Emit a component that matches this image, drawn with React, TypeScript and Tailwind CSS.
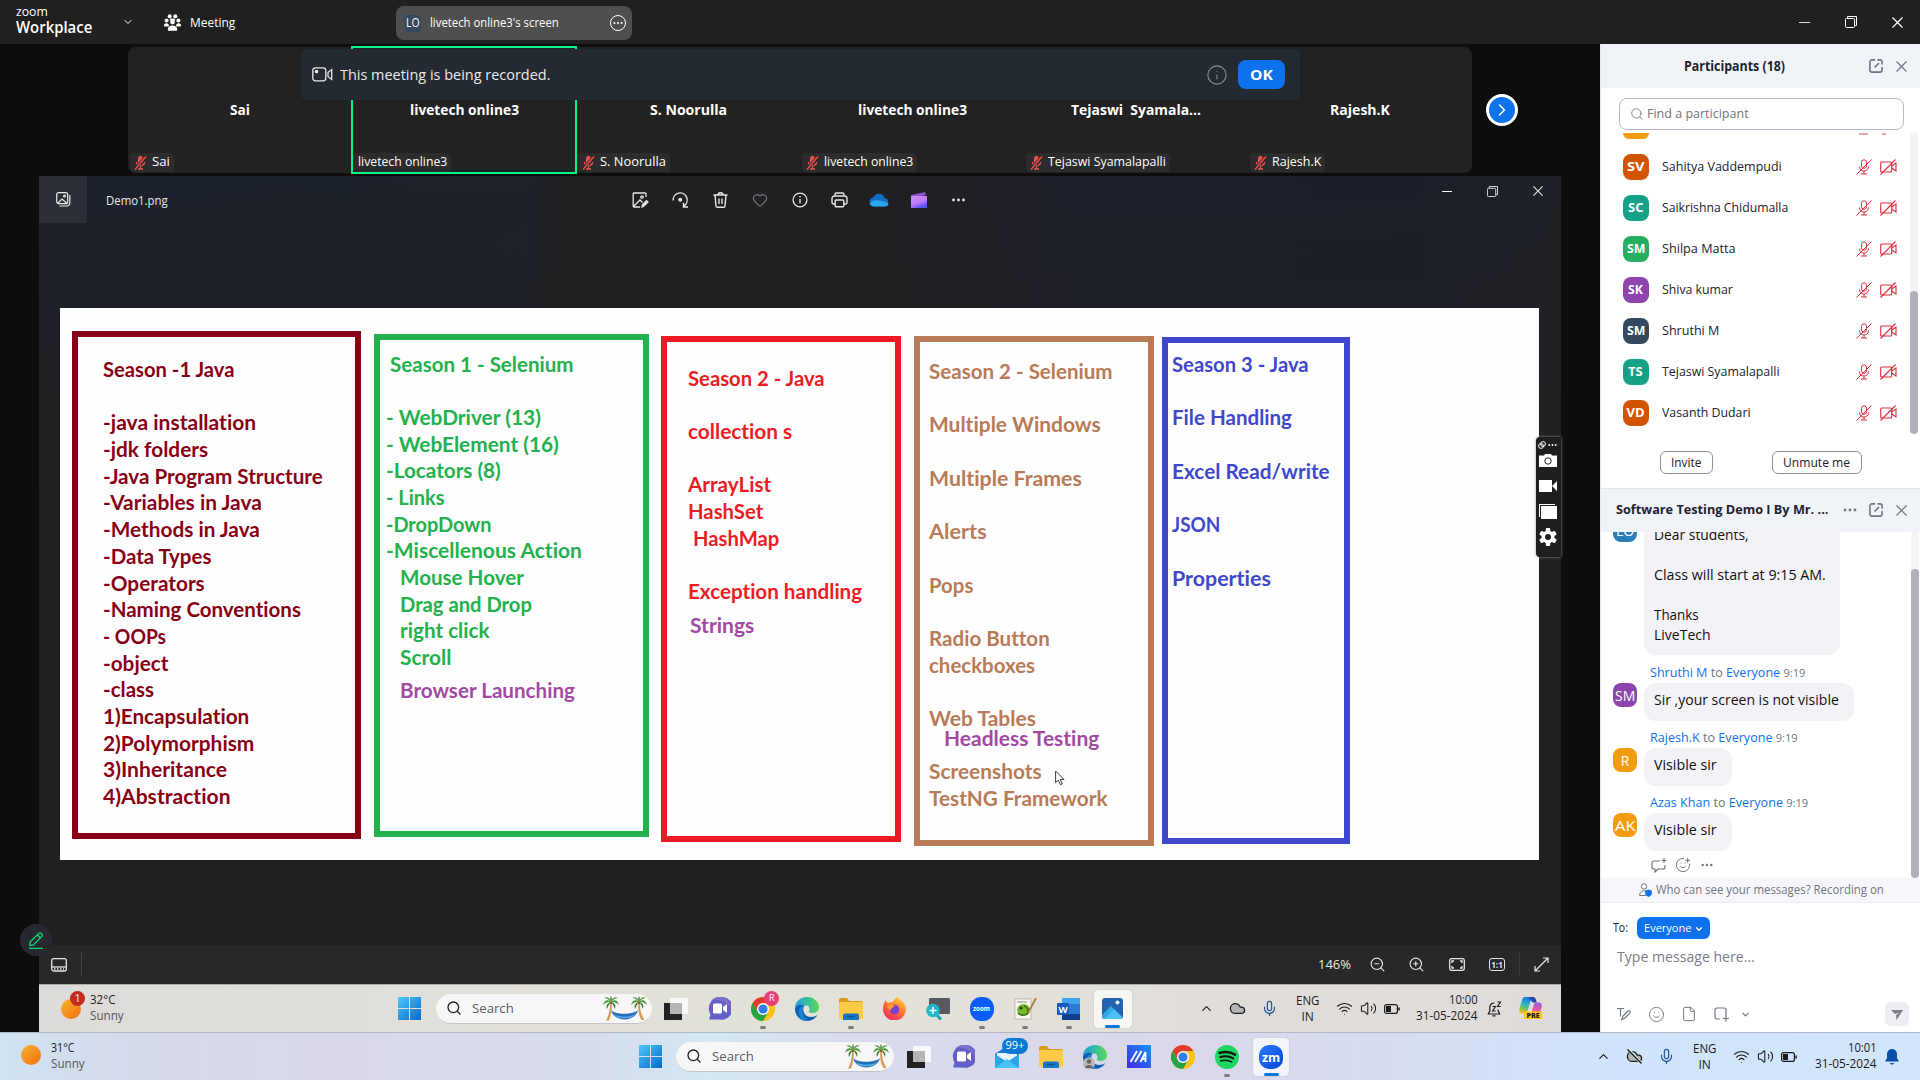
import React, { useLayoutEffect, useRef, useState } from "react";
import {
  X, ChevronDown, ChevronRight, ChevronUp, Search, Mic, Heart, Info,
  ZoomIn, ZoomOut, Wifi, Volume2, Smile, File, SmilePlus, Cloud,
} from "lucide-react";

/* Text set to an exact advance width. */
function Fit({ w, className = "", children }: { w: number; className?: string; children: React.ReactNode }) {
  const ref = useRef<HTMLSpanElement>(null);
  const [k, setK] = useState(1);
  useLayoutEffect(() => {
    if (ref.current) setK(w / ref.current.offsetWidth);
  }, [w]);
  return (
    <span className={`block shrink-0 whitespace-pre ${className}`} style={{ width: w }}>
      <span ref={ref} className="inline-block origin-left" style={{ transform: `scaleX(${k})` }}>{children}</span>
    </span>
  );
}

const RestoreIcon = ({ s = 12 }: { s?: number }) => (
  <svg width={s} height={s} viewBox="0 0 12 12" fill="none" stroke="currentColor">
    <rect x=".5" y="2.5" width="9" height="9" rx="1" />
    <path d="M2.5 2.5V.5h9v9h-2" />
  </svg>
);
const CloseIcon = ({ s = 11 }: { s?: number }) => (
  <svg width={s} height={s} viewBox="0 0 11 11" fill="none" stroke="currentColor" strokeWidth="1.200"><path d="m.5.500 10 10M10.500.500l-10 10" /></svg>
);
const Dots = ({ s = 14 }: { s?: number }) => (
  <svg width={s} height="4" viewBox="0 0 14 4" fill="currentColor"><circle cx="2" cy="2" r="1.4" /><circle cx="7" cy="2" r="1.4" /><circle cx="12" cy="2" r="1.4" /></svg>
);

/* ---------- top bar ---------- */
function TopBar() {
  return (
    <header className="flex h-11 shrink-0 items-center bg-[#202020] text-white">
      <div className="-mt-[3px] ml-4 flex w-[75px] flex-col">
        <Fit w={32} className="h-[14px] text-[13px] leading-[12px] font-medium">zoom</Fit>
        <Fit w={76} className="text-[15.500px] leading-[17px] font-semibold">Workplace</Fit>
      </div>
      <ChevronDown className="ml-[31px]" size={12} />
      <svg className="ml-[30px]" width="17" height="17" viewBox="0 0 17 17" fill="#fff">
        <circle cx="5.7" cy="2.2" r="2" /><circle cx="11.3" cy="2.2" r="2" /><circle cx="2.6" cy="6.6" r="2" /><circle cx="14.4" cy="6.6" r="2" />
        <circle cx="8.5" cy="8" r="2.4" /><rect x="5.8" y="4.4" width="5.4" height="2" rx="1" /><path d="M0 11.5c0-3 4.5-3 5 0 0 .8-.3 1-1 1H1c-.7 0-1-.2-1-1zM12 11.5c.5-3 5-3 5 0 0 .8-.3 1-1 1h-3c-.7 0-1-.2-1-1z" />
        <path d="M3.8 15.2c0-4.8 9.4-4.8 9.4 0 0 1-.5 1.6-1.4 1.6H5.200c-.9 0-1.400-.6-1.400-1.600z" />
      </svg>
      <Fit w={45} className="mt-[2px] ml-[9px] text-[13px]">Meeting</Fit>
      <div className="mt-[2px] ml-[161px] flex h-[34px] w-[236px] items-center rounded-lg bg-[#4f4f4f]">
        <span className="ml-2 flex size-[17px] items-center justify-center rounded bg-[#34495e] text-[12px]"><Fit w={14}>LO</Fit></span>
        <Fit w={129} className="ml-[9px] text-[13px]">livetech online3's screen</Fit>
        <span className="ml-[51px] flex size-4 items-center justify-center rounded-full border border-white"><Dots s={10} /></span>
      </div>
      <div className="mr-[17px] ml-auto flex items-center gap-[35px]">
        <span className="h-px w-[11px] bg-[#ddd]" /><RestoreIcon /><CloseIcon />
      </div>
    </header>
  );
}

/* ---------- video strip ---------- */
const MutedMic = () => (
  <svg width="13" height="14" viewBox="0 0 13 14"><rect x="4" y="0" width="5" height="8" rx="2.500" fill="#f0504f" /><path d="M2.500 6c0 5 8 5 8 0M6.500 9.500V13M4 13h5" stroke="#f0504f" fill="none" strokeWidth="1.300" /><path d="M12 .5 1 13.500" stroke="#222" strokeWidth="3" /><path d="M12 .5 1 13.500" stroke="#f0504f" strokeWidth="1.400" /></svg>
);
const tiles = [
  { t: "Sai", tw: 20, l: "Sai", lw: 18, m: true },
  { t: "livetech online3", tw: 109, l: "livetech online3", lw: 89, m: false },
  { t: "S. Noorulla", tw: 77, l: "S. Noorulla", lw: 66, m: true },
  { t: "livetech online3", tw: 109, l: "livetech online3", lw: 89, m: true },
  { t: "Tejaswi  Syamala...", tw: 130, l: "Tejaswi Syamalapalli", lw: 118, m: true },
  { t: "Rajesh.K", tw: 60, l: "Rajesh.K", lw: 49, m: true },
];
function VideoStrip() {
  return (
    <div className="relative flex h-[132px] shrink-0 items-center pl-[128px]">
      <div className="flex h-[126px] w-[1344px] rounded-lg bg-[#222]">
        {tiles.map((t, i) => (
          <div key={i} className="relative flex w-[224px] flex-col items-center text-white">
            {!t.m && <div className="absolute -inset-x-px -top-px -bottom-px border-2 border-[#00f58a]" />}
            <div className="flex h-[124px] items-center"><Fit w={t.tw} className="text-[15px] font-bold">{t.t}</Fit></div>
            <div className="absolute bottom-[1px] left-[2px] flex h-[19px] items-center gap-[5px] rounded bg-[#2c2c2c] px-1 text-[12.500px]">
              {t.m && <MutedMic />}<Fit w={t.lw}>{t.l}</Fit>
            </div>
          </div>
        ))}
      </div>
      <span className="ml-[14px] flex size-8 items-center justify-center rounded-full border-[3px] border-white bg-[#0e72ed] text-white"><ChevronRight size={20} strokeWidth={1.800} /></span>
      <div className="absolute top-[5px] left-[301px] flex h-[51px] w-[999px] items-center rounded-md bg-[#242a31] text-[#e8e8e8]">
        <svg className="ml-[11px]" width="21" height="15" viewBox="0 0 21 15" fill="none" stroke="currentColor" strokeWidth="1.300"><rect x=".8" y=".8" width="13" height="13" rx="2.500" /><circle cx="4.500" cy="4.500" r="1.200" fill="currentColor" /><path d="M16 5.500 19.700 2.500v10L16 9.500z" /></svg>
        <Fit w={210} className="ml-[7px] text-[15px]">This meeting is being recorded.</Fit>
        <Info className="ml-[656px] text-[#8b8f94]" size={22} strokeWidth={1.200} />
        <span className="ml-[10px] flex h-[29px] w-[47px] items-center justify-center rounded-lg bg-[#0e72ed] text-[15px] font-bold text-white"><Fit w={23}>OK</Fit></span>
      </div>
    </div>
  );
}

/* ---------- board ---------- */
type Line = [string, number, string?];
function Board({ box, lines }: { box: string; lines: (Line | null)[] }) {
  return (
    <div className={`relative shrink-0 border-[6px] font-['Lato',sans-serif] text-[21.500px] leading-[26.700px] font-bold [font-variant-ligatures:none] ${box}`}>
      {lines.map((l, i) => l ? <div key={i} className={`h-[26.700px] ${l[2] ?? ""}`}><Fit w={l[1] + 1.5}>{l[0]}</Fit></div> : <div key={i} className="h-[26.700px]" />)}
    </div>
  );
}
function Picture() {
  return (
    <div className="relative ml-[21px] flex h-[552px] w-[1479px] items-start bg-[#fefefe]">
      <Board box="ml-[12px] mt-[22.500px] h-[508px] w-[289px] border-[#880015] text-[#880015] pl-[24.500px] pt-[19.500px]" lines={[
        ["Season -1 Java", 130], null, ["-java installation", 152], ["-jdk folders", 104], ["-Java Program Structure", 218], ["-Variables in Java", 157], ["-Methods in Java", 155], ["-Data Types", 107], ["-Operators", 100], ["-Naming Conventions", 196], ["- OOPs", 62], ["-object", 64], ["-class", 50], ["1)Encapsulation", 145], ["2)Polymorphism", 150], ["3)Inheritance", 123], ["4)Abstraction", 126]]} />
      <Board box="ml-[13px] mt-[26px] h-[503px] w-[275px] border-[#22b14c] text-[#22b14c] pl-[6px] pt-[10.500px]" lines={[
        ["Season 1 - Selenium", 182, "ml-[4px]"], null, ["- WebDriver (13)", 153], ["- WebElement (16)", 171], ["-Locators (8)", 113], ["- Links", 57], ["-DropDown", 104], ["-Miscellenous Action", 194], ["Mouse Hover", 122, "ml-[13.500px]"], ["Drag and Drop", 130, "ml-[13.500px]"], ["right click", 88, "ml-[13.500px]"], ["Scroll", 50, "ml-[13.500px]"], ["Browser Launching", 173, "ml-[13.500px] mt-[6px] text-[#a349a4]"]]} />
      <Board box="ml-[12px] mt-[28px] h-[506px] w-[240px] border-[#ed1c24] text-[#ed1c24] pl-[21px] pt-[22.500px]" lines={[
        ["Season 2 - Java", 135], null, ["collection s", 103], null, ["ArrayList", 82], ["HashSet", 74], ["HashMap", 85, "ml-[5px]"], null, ["Exception handling", 173], ["Strings", 63, "ml-[2px] mt-[7px] text-[#a349a4]"]]} />
      <Board box="ml-[12.500px] mt-[28px] h-[510px] w-[240px] border-[#b97a57] text-[#b97a57] pl-[9.500px] pt-[16px]" lines={[
        ["Season 2 - Selenium", 182], null, ["Multiple Windows", 170], null, ["Multiple Frames", 151], null, ["Alerts", 56], null, ["Pops", 43], null, ["Radio Button", 119], ["checkboxes", 105], null, ["Web Tables", 105], null, ["Screenshots", 111], ["TestNG Framework", 177]]} />
      <div className="absolute top-[417px] left-[884px] font-['Lato',sans-serif] text-[21.500px] leading-[26.700px] font-bold text-[#a349a4] [font-variant-ligatures:none]"><Fit w={155}>Headless Testing</Fit></div>
      <Board box="ml-[8px] mt-[29px] h-[507px] w-[188px] border-[#3f48cc] text-[#3f48cc] pl-[4.500px] pt-[8px]" lines={[
        ["Season 3 - Java", 135], null, ["File Handling", 118], null, ["Excel Read/write", 156], null, ["JSON", 47], null, ["Properties", 97]]} />
      <svg className="absolute top-[462px] left-[995px]" width="10" height="16" viewBox="0 0 10 16"><path d="M.6 1v11.500l2.800-2.300 2 4.500 1.900-.8-2-4.400H9z" fill="#fff" stroke="#223" strokeWidth=".9" /></svg>
      <div className="absolute top-[129px] left-[1476px] flex h-[120px] w-[25px] flex-col items-center rounded-l bg-[#1e1e20] pr-[2px] text-white shadow-[0_0_3px_#999]">
        <div className="mt-[3px] flex h-[9px] items-center gap-[2px]"><svg width="8" height="8" viewBox="0 0 8 8" fill="none" stroke="currentColor"><circle cx="3" cy="5" r="2.400" /><circle cx="5" cy="3" r="2.400" /></svg><Dots s={9} /></div>
        <svg className="mt-[5px]" width="18" height="13" viewBox="0 0 18 13"><path d="M0 1.500h5L6 0h6l1 1.500h5V13H0z" fill="#fff" /><circle cx="9" cy="7" r="3.200" fill="none" stroke="#1e1e20" /></svg>
        <svg className="mt-[13px]" width="18" height="12" viewBox="0 0 18 12" fill="#fff"><path d="M0 0h13v12H0zM13 6l5-5v10z" /></svg>
        <svg className="mt-[12px]" width="18" height="15" viewBox="0 0 18 15" fill="#fff"><path d="M0 0h16v1H1v12H0z" /><path d="M2 2h16v13H2z" /></svg>
        <svg className="mt-[9px]" width="18" height="18" viewBox="0 0 18 18"><g fill="#fff"><circle cx="9" cy="9" r="6.500" />{[0, 60, 120].map((a) => <rect key={a} x="6.800" y="0" width="4.400" height="18" rx="1" transform={`rotate(${a} 9 9)`} />)}</g><circle cx="9" cy="9" r="3" fill="#1e1e20" /></svg>
      </div>
    </div>
  );
}

/* ---------- photo viewer ---------- */
function PhotoViewer() {
  return (
    <section className="flex h-[808px] flex-col bg-[#202021] bg-[linear-gradient(180deg,transparent_0px,#202021_320px),linear-gradient(90deg,#1b212c_0%,#1d222b_32%,#202123_34%,#221f22_55%,#1d1f2b_68%,#1c1f2a_90%,#1f2128_100%)]">
      <div className="flex h-[132px] shrink-0 items-start text-[#e6e6e6]">
        <div className="flex h-[47px] w-12 items-center justify-center bg-[#2b2f38]"><svg width="15" height="15" viewBox="0 0 15 15" fill="none" stroke="currentColor" strokeWidth="1.200"><rect x=".7" y=".7" width="11" height="11" rx="2" /><path d="M13.800 3v8a3 3 0 0 1-3 3H3.500M2 11l4-4 4.500 4" /><circle cx="8.500" cy="4" r=".9" /></svg></div>
        <Fit w={62} className="mt-[16px] ml-[19px] text-[12.500px] leading-[18px]">Demo1.png</Fit>
        <div className="mt-[15px] ml-[453px] grid grid-cols-[repeat(9,39.700px)] place-items-center [&>*]:h-[18px]">
          <svg width="17" height="18" viewBox="0 0 17 18" fill="none" stroke="currentColor" strokeWidth="1.300"><path d="M14 6V2.800A.8.8 0 0 0 13.200 2H2a.8.8 0 0 0-.8.8v12.400c0 .4.300.8.800.8h6M2 15l6-6 2.500 2.500" /><circle cx="10" cy="6" r="1.200" /><path d="m9.500 16.500.7-3L14.500 9l2 2-4.500 4.600z" fill="currentColor" strokeWidth=".6" /></svg>
          <svg width="17" height="18" viewBox="0 0 17 18" fill="none" stroke="currentColor" strokeWidth="1.400"><path d="M1.200 9.500A7 7 0 1 1 12 14.800M16 16h-4.500v-4.200" /><circle cx="8.200" cy="8.800" r="1.300" fill="currentColor" /></svg>
          <svg width="15" height="18" viewBox="0 0 15 18" fill="none" stroke="currentColor" strokeWidth="1.400"><path d="M.5 4h14M5 4c0-3 5-3 5 0M2 4l1 11a1.400 1.400 0 0 0 1.400 1.300h6.200A1.400 1.400 0 0 0 12 15l1-11M6 7.500v5.500M9 7.500v5.500" /></svg>
          <Heart size={16} strokeWidth={1.600} className="text-[#77787b]" />
          <svg width="16" height="18" viewBox="0 0 16 18" fill="none" stroke="currentColor" strokeWidth="1.300"><circle cx="8" cy="9" r="6.900" /><path d="M8 8v4.500M8 5v1.500" /></svg>
          <svg width="17" height="18" viewBox="0 0 17 18" fill="none" stroke="currentColor" strokeWidth="1.400"><path d="M4 5V3.500A1.500 1.500 0 0 1 5.500 2h6A1.500 1.500 0 0 1 13 3.500V5M4 13H2.500A1.500 1.500 0 0 1 1 11.500V7.300A2.300 2.300 0 0 1 3.300 5h10.400A2.300 2.300 0 0 1 16 7.300v4.200a1.500 1.500 0 0 1-1.500 1.500H13" /><rect x="4.200" y="9" width="8.600" height="6.800" rx="1" /></svg>
          <svg width="20" height="14" viewBox="0 0 20 14"><path d="M5 13.500a4.500 4.500 0 0 1-.8-8.900A6 6 0 0 1 15.500 5 4.300 4.300 0 0 1 15.800 13.500z" fill="#0f70c8" /><path d="M.8 10.500C3 7 8 5.500 19.500 10.500a3.500 3.500 0 0 1-3.500 3H5a4.500 4.500 0 0 1-4.200-3z" fill="#28a8ea" /></svg>
          <svg width="16" height="16" viewBox="0 0 16 16"><defs><linearGradient id="cg" x1="0" y1="0" x2=".5" y2="1"><stop stopColor="#c88af6" /><stop offset=".6" stopColor="#c07ef8" /><stop offset="1" stopColor="#5b52f0" /></linearGradient></defs><path d="M0 3 14 0l1 3-9 2.500H0z" fill="#8d52c9" /><path d="M0 4h16v12H0z" fill="url(#cg)" /></svg>
          <span className="flex items-center"><Dots s={17} /></span>
        </div>
        <div className="mt-[7px] mr-[18px] ml-auto flex h-4 items-center gap-[35px]"><span className="h-px w-[10px] bg-white" /><RestoreIcon s={11} /><CloseIcon s={10} /></div>
      </div>
      <Picture />
      <div className="mt-auto flex h-[39px] items-center bg-[#28282b] text-[#e6e6e6]">
        <svg className="ml-3" width="16" height="14" viewBox="0 0 16 14" fill="none" stroke="currentColor" strokeWidth="1.300"><rect x=".7" y=".7" width="14.600" height="12.300" rx="2" /><path d="M.7 9h14.600" /><path d="M3 11h10" strokeDasharray="1.500 1.500" /></svg>
        <span className="ml-[14px] h-6 w-px bg-[#444]" />
        <Fit w={33} className="ml-auto text-[13px]">146%</Fit>
        <ZoomOut className="ml-[18px]" size={17} strokeWidth={1.600} />
        <ZoomIn className="ml-[22px]" size={17} strokeWidth={1.600} />
        <svg className="ml-[24px]" width="16" height="13" viewBox="0 0 16 13" fill="none" stroke="currentColor" strokeWidth="1.300"><rect x=".7" y=".7" width="14.600" height="11.600" rx="1.800" /><path d="M3 5V3h2M11 3h2v2M13 8v2h-2M5 10H3V8" /></svg>
        <span className="ml-[24px] flex h-[13px] w-4 items-center justify-center rounded-[3px] border border-current text-[8px] font-bold">1:1</span>
        <span className="ml-[14px] h-6 w-px bg-[#3a3a3d]" />
        <svg className="mr-[12px] ml-[14px]" width="15" height="15" viewBox="0 0 15 15" fill="none" stroke="currentColor" strokeWidth="1.200"><path d="M9 1h5v5M14 1 1 14M1 9v5h5" /></svg>
      </div>
    </section>
  );
}

/* ---------- taskbar icons ---------- */
const Win = () => (
  <svg width="23" height="23" viewBox="0 0 23 23"><defs><linearGradient id="wg" x1="0" y1="0" x2="1" y2="1"><stop stopColor="#4cc8f8" /><stop offset="1" stopColor="#0669cc" /></linearGradient></defs><path d="M0 0h11v11H0zM12 0h11v11H12zM0 12h11v11H0zM12 12h11v11H12z" fill="url(#wg)" /></svg>
);
const Frond = ({ x }: { x: number }) => (
  <g transform={`translate(${x} 6)`}>
    <g fill="#4d9a3a"><path d="M0 0C-3-3-7-2-8 3-5 0-3 0 0 0z" /><path d="M0 0c3-3 7-2 8 3C5 0 3 0 0 0z" /><path d="M0 0C-1-4-4-6-7-4-4-4-2-2 0 0zM0 0c1-4 4-6 7-4C4-4 2-2 0 0z" /></g>
    <g fill="#2f7429"><path d="M0 0c-4 1-5 4-4 7 1-3 2-5 4-7zM0 0c4 1 5 4 4 7C3 4 2 2 0 0z" /><path d="M0 0c-1-2-1-4 0-6 1 2 1 4 0 6z" /></g>
    <circle cy=".8" r="1.300" fill="#8a5a28" />
  </g>
);
const Palms = () => (
  <svg width="45" height="25" viewBox="0 0 45 25">
    <g fill="#d39a58"><path d="M8 7h1.800C10 14 9 19 7 24.500H4C7 19 8 14 8 7zM36.200 7H38c0 7 1 11 4.500 17h-3C36.500 19 36 14 36.200 7z" /></g>
    <path d="M9 14c4 5 22 5 27 0-3 12.500-24 12.500-27 0z" fill="#2470b8" /><path d="M10.500 17c5 5 19 5 24 0-4 7-20 7-24 0z" fill="#5eb0ee" />
    <Frond x={9} /><Frond x={37} />
  </svg>
);
const TaskView = () => (<svg width="24" height="22" viewBox="0 0 24 22"><rect x="0" y="5" width="18" height="17" fill="#222" /><rect x="6" y="0" width="18" height="16" fill="#fff" opacity=".8" /><rect x="6" y="5" width="12" height="11" fill="#b5b5b5" /></svg>);
const ChatIcon = () => (<svg width="23" height="23" viewBox="0 0 23 23"><path d="M11.500 0a11.500 11.500 0 1 1-1 22.500H1l1.500-5A11.500 11.500 0 0 1 11.500 0z" fill="#6460c8" /><path d="M11.500 0A11.500 11.500 0 0 1 23 11C18 3 8 1 3 4a11 11 0 0 1 8.500-4z" fill="#7c70c8" /><rect x="5" y="6.500" width="9" height="10" rx="1.500" fill="#fff" /><path d="m15 10 4-3v9l-4-3z" fill="#fff" /></svg>);
const Chrome = () => (<svg width="24" height="24" viewBox="0 0 24 24"><circle cx="12" cy="12" r="12" fill="#fbc116" /><path d="M12 0a12 12 0 0 1 10.400 6H12L6.800 15 1.600 6A12 12 0 0 1 12 0z" fill="#e33b2e" /><path d="M1.600 6A12 12 0 0 0 12 24l5.200-9-5.200 3-5.200-3z" fill="#25a347" /><circle cx="12" cy="12" r="6" fill="#fff" /><circle cx="12" cy="12" r="4.600" fill="#2f7de9" /></svg>);
const Edge = () => (<svg width="24" height="24" viewBox="0 0 24 24"><defs><linearGradient id="eg" x1="0" x2="1"><stop stopColor="#1b9de2" /><stop offset="1" stopColor="#5bd855" /></linearGradient></defs><path d="M0 11.500C0 4 6 0 12 0c7 0 12 5 12 10 0 4-3 6-6.500 6-3 0-4-1-3.500-2 1-1.500 1-5-3-5.500C6 8 1 10 0 14z" fill="url(#eg)" /><path d="M0 12C1 8 6 7 9.500 8.500 7 11 8 20 16 20c2.500 0 5-1 6.500-2C20 22 16 24 12 24 5 24 0 18.500 0 12z" fill="#0f5fb5" /><path d="M9.500 8.500c-4 5-2 13 5 15.300C8 24.500 4 21 3.700 16 3.500 12 6 9 9.500 8.500z" fill="#1c82d4" /></svg>);
const Folder = () => (<svg width="24" height="22" viewBox="0 0 24 22"><path d="M0 2a2 2 0 0 1 2-2h6l2 3H22a2 2 0 0 1 2 2v4H0z" fill="#d99a1b" /><rect x="0" y="4" width="24" height="17" rx="1.500" fill="#fccb45" /><path d="M4 22v-4.500a2 2 0 0 1 2-2h12a2 2 0 0 1 2 2V22z" fill="#1976c4" /><path d="M8 18.500h8" stroke="#114f8d" strokeWidth="1.300" /></svg>);
const Firefox = () => (<svg width="23" height="23" viewBox="0 0 23 23"><defs><linearGradient id="fg" x1=".8" y1="0" x2=".2" y2="1"><stop stopColor="#ffd836" /><stop offset=".5" stopColor="#ff6d2e" /><stop offset="1" stopColor="#e8246b" /></linearGradient></defs><path d="M15 0c1 3 8 5 8 12a11.500 11.500 0 0 1-23 0C0 8 1 5 3 3c0 2 1 2.500 2 3 2-1 3-1 5-1 1-3 3-4 5-5z" fill="url(#fg)" /><circle cx="11.500" cy="12.500" r="4.800" fill="#7a3fd0" /><path d="M4 8c4-2 6 0 8 1-2 1-4 2-4 4-1 0-4-1-4-5z" fill="#ff9a2c" /></svg>);
const Snip = () => (<svg width="24" height="22" viewBox="0 0 24 22"><rect x="3" y="0" width="21" height="16" rx="1" fill="#56595f" /><path d="m10 16 5 5.500" stroke="#1ba4b8" strokeWidth="3" /><circle cx="7" cy="12.500" r="6.800" fill="#23b5ca" /><path d="M7 9v7M3.500 12.500h7" stroke="#fff" strokeWidth="1.500" /></svg>);
const ZoomRound = () => (<span className="flex size-6 items-center justify-center rounded-[11px] bg-[#0b5cff] text-white"><Fit w={17} className="text-[7px] leading-[8px] font-bold">zoom</Fit></span>);
const Npp = () => (<svg width="23" height="22" viewBox="0 0 23 22"><rect x="1" y="1" width="16" height="20" fill="#f8f8f0" stroke="#999" strokeWidth=".6" /><path d="M3 4h10" stroke="#888" /><ellipse cx="9.500" cy="12" rx="6.500" ry="6" fill="#79bb2e" /><circle cx="7" cy="10" r="1.600" fill="#24401a" /><path d="M4 15c3 3 8 3 11-1M10 8c4 1 5 4 3 6" stroke="#2c6b18" fill="none" strokeWidth="1.500" /><path d="m14 15 8-15" stroke="#b07b35" strokeWidth="1.800" /></svg>);
const Word = () => (<svg width="24" height="22" viewBox="0 0 24 22"><rect x="5" y="0" width="18" height="22" rx="1.500" fill="#2b7cd3" /><path d="M5 0h18v6H5z" fill="#41a5ee" /><path d="M5 16h18v6H5z" fill="#103f91" /><rect x="0" y="5" width="12" height="12" rx="1" fill="#185abd" /><text x="6" y="14.500" fontSize="9.500" fontWeight="700" fill="#fff" textAnchor="middle">W</text></svg>);
const Photos = () => (<svg width="21" height="21" viewBox="0 0 21 21"><rect width="21" height="21" rx="3" fill="#2163ae" /><path d="M0 17 9 8l12 12-3 1H3a3 3 0 0 1-3-3z" fill="#31a9e8" /><path d="M3 21 12 11l9 9-3 1z" fill="#4fc0f2" /><circle cx="15.500" cy="4.500" r="2" fill="#fff" /></svg>);
const Copilot = () => (
  <svg width="24" height="23" viewBox="0 0 24 23">
    <defs>
      <linearGradient id="cl" x1=".6" y1="0" x2=".3" y2="1"><stop stopColor="#1a6fd8" /><stop offset=".45" stopColor="#27b5c4" /><stop offset=".75" stopColor="#7cc84f" /><stop offset="1" stopColor="#f2c21c" /></linearGradient>
      <linearGradient id="cr" x1=".5" y1="0" x2=".4" y2="1"><stop stopColor="#a25be0" /><stop offset=".6" stopColor="#ea5c9f" /><stop offset="1" stopColor="#f58a5a" /></linearGradient>
    </defs>
    <path d="M6 0h9L11.500 4 8.500 14c-.7 2-1.500 2.500-3 2.500H3c-3 0-3-3-2.500-5L3 3C3.600 1 4.500 0 6 0z" fill="url(#cl)" />
    <path d="M8.500 0H14c2.500 0 3 2.500 3.800 5.500H14.500C12.500 5.500 12 3 11 1.500 10.500.5 9.500 0 8.500 0z" fill="#2448b0" />
    <path d="M15.500 5.500H20c3 0 3.200 3 2.500 5.500L21 16c-.5 1.500-1.500 2.500-3 2.500H9c2 0 3-1 3.500-3z" fill="url(#cr)" />
    <rect x="5" y="14.500" width="18" height="7.500" rx="1" fill="#ffc61a" /><text x="14" y="20.800" fontSize="7" fontWeight="800" textAnchor="middle" fill="#222">PRE</text>
  </svg>
);
const Mail = () => (<svg width="24" height="22" viewBox="0 0 24 22"><path d="M0 8 12 0l12 8v14H0z" fill="#1478c8" /><path d="M2 7h20v8H2z" fill="#eaf6ff" /><path d="m0 8 12 8 12-8v14H0z" fill="#2ba5e6" /><path d="M0 22 12 13l12 9z" fill="#48c3f5" /></svg>);
const EdgeUser = () => (<span className="relative"><Edge /><svg className="absolute -bottom-px left-0" width="12" height="13" viewBox="0 0 12 13"><circle cx="6" cy="6.500" r="6" fill="#b9b9b9" /><circle cx="6" cy="4.500" r="2.200" fill="#666" /><path d="M2 11c0-4 8-4 8 0z" fill="#666" /></svg></span>);
const Armoury = () => (<svg width="24" height="23" viewBox="0 0 24 23"><defs><linearGradient id="ag" x1="1" y1="0" x2="0" y2="1"><stop stopColor="#1296f5" /><stop offset="1" stopColor="#4527e8" /></linearGradient></defs><rect width="24" height="23" fill="url(#ag)" /><path d="m3.500 17 6.500-11M8 17l6.500-11M13.500 17l5-10v10M15 14h3" stroke="#fff" strokeWidth="1.800" fill="none" /></svg>);
const Spotify = () => (<svg width="24" height="24" viewBox="0 0 24 24"><circle cx="12" cy="12" r="12" fill="#1ed760" /><g stroke="#111" fill="none" strokeLinecap="round"><path d="M4.500 8c5-1.500 11-1 15.500 1.600" strokeWidth="2.400" /><path d="M5.200 12c4.500-1.300 9.500-.8 13 1.400" strokeWidth="2" /><path d="M5.800 15.800c4-1 8-.6 10.800 1.100" strokeWidth="1.600" /></g></svg>);
const Zm = () => (<span className="flex size-6 items-center justify-center rounded-[10px] bg-linear-to-br from-[#2f7bff] to-[#0743d8] text-white"><Fit w={18} className="text-[13px] leading-[14px] font-bold">zm</Fit></span>);

const Battery = () => (<svg width="16" height="10" viewBox="0 0 16 10"><rect x=".6" y=".6" width="12.800" height="8.800" rx="2" fill="none" stroke="currentColor" strokeWidth="1.200" /><rect x="2" y="2" width="5" height="6" fill="currentColor" /><path d="M15 3.500v3" stroke="currentColor" strokeWidth="1.500" /></svg>);

function SearchPill({ className }: { className: string }) {
  return (
    <div className={`flex h-[30px] items-center rounded-full border-b border-[#c4c4c8] bg-[#f8f7f8] ${className}`}>
      <Search className="ml-[10px] text-[#222]" size={16} strokeWidth={2} />
      <Fit w={42} className="ml-[10px] text-[13.500px] text-[#5a5a5a]">Search</Fit>
      <span className="mr-[5px] ml-auto"><Palms /></span>
    </div>
  );
}
function Weather({ t, w }: { t: string; w: number }) {
  return (
    <div className="-mt-[2px] text-[12px] leading-4 text-[#222]"><Fit w={w}>{t}</Fit><Fit w={34} className="text-[#555]">Sunny</Fit></div>
  );
}
const Sun = () => <span className="block size-[20px] rounded-full bg-linear-to-br from-[#f5b52a] to-[#f06a0f]" />;

function Tray({ time, muted, children }: { time: string; muted?: boolean; children: React.ReactNode }) {
  return (
    <div className="ml-auto flex items-center text-[#1b1b1b]">
      <ChevronUp size={15} strokeWidth={1.800} />
      <span className="relative ml-[15px]">
        <Cloud className="fill-[#b5b5b5]" size={17} strokeWidth={1.800} />
        {muted && <svg className="absolute inset-0" width="17" height="17" viewBox="0 0 17 17"><path d="m2.500 1.500 13 14" stroke="#d5e4f8" strokeWidth="3" /><path d="m1.500 1.500 14 14" stroke="#1b1b1b" strokeWidth="1.400" /></svg>}
      </span>
      <Mic className="ml-[15px] text-[#24579d]" size={17} strokeWidth={1.700} />
      <div className="ml-[18px] flex flex-col items-center text-[12px] leading-4"><Fit w={23}>ENG</Fit><Fit w={12}>IN</Fit></div>
      <Wifi className="ml-[17px]" size={17} strokeWidth={1.500} /><Volume2 className="ml-[7px]" size={17} strokeWidth={1.500} /><span className="ml-[7px]"><Battery /></span>
      <div className={`-mt-px flex w-[62px] flex-col items-end text-[12px] leading-4 ${muted ? "ml-[18px]" : "ml-[16px]"}`}><Fit w={29}>{time}</Fit><Fit w={62}>31-05-2024</Fit></div>
      {children}
    </div>
  );
}

const Slot = ({ children, state = "" }: { children: React.ReactNode; state?: string }) => (
  <div className={`relative flex h-[38px] items-center justify-center rounded ${state === "active" ? "bg-white/70 shadow-[0_0_1px_#888]" : ""}`}>
    {children}
    {state === "dot" && <span className="absolute -bottom-px h-[3px] w-[6px] rounded bg-[#7c7c7c]" />}
    {state === "active" && <span className="absolute bottom-0 h-[3px] w-[15px] rounded bg-[#0a76d6]" />}
  </div>
);

function SharedTaskbar() {
  return (
    <div className="flex h-12 items-center border-t border-[#aaa] bg-linear-to-r from-[#dedcda] via-[#e3e2d8] to-[#dfdbda]">
      <div className="relative ml-[22px]"><Sun /><span className="absolute -top-[8px] left-[9px] flex size-[15px] items-center justify-center rounded-full bg-[#c42b1c] text-[10px] text-white">1</span></div>
      <div className="ml-[9px]"><Weather t="32°C" w={25} /></div>
      <span className="ml-[274px]"><Win /></span>
      <SearchPill className="ml-[15px] w-[216px]" />
      <div className="ml-[5px] grid grid-cols-[repeat(11,37.700px)] gap-x-[6px]">
        <Slot><TaskView /></Slot><Slot><ChatIcon /></Slot>
        <Slot state="dot"><Chrome /><span className="absolute top-[1px] left-[20px] flex size-[15px] items-center justify-center rounded-full bg-[#e83e77] text-[9px] text-white">R</span></Slot>
        <Slot><Edge /></Slot><Slot state="dot"><Folder /></Slot><Slot><Firefox /></Slot><Slot><Snip /></Slot><Slot state="dot"><ZoomRound /></Slot><Slot state="dot"><Npp /></Slot><Slot state="dot"><Word /></Slot><Slot state="active"><Photos /></Slot>
      </div>
      <Tray time="10:00">
        <svg className="ml-[9px]" width="15" height="16" viewBox="0 0 15 16" fill="none" stroke="currentColor" strokeWidth="1.200"><path d="M7.500 2C4.500 1.800 2.800 4 2.800 6.500V10L1.300 13h11.400l-1.500-3V8.500M5.500 14.800h3" /><path d="M5.500 5.500h3L5.500 10h3.200M10.500 1h3l-3 4.500h3.200" strokeWidth="1.100" /></svg>
        <span className="mr-[18px] ml-[17px]"><Copilot /></span>
      </Tray>
    </div>
  );
}

function LocalTaskbar() {
  return (
    <footer className="flex h-12 shrink-0 items-center border-t border-[#aeb6c4] bg-[linear-gradient(90deg,#cfe3f1_0%,#d5d9ec_7%,#d9d8ea_18%,#d6dcee_31%,#d3e8f4_37%,#d8dbee_44%,#dad8ea_62%,#d6dcf0_72%,#cfe4fa_84%,#d2e5fb_100%)]">
      <span className="-mt-[3px] ml-[21px]"><Sun /></span>
      <div className="ml-[10px]"><Weather t="31°C" w={23} /></div>
      <span className="-mt-px ml-[554px]"><Win /></span>
      <SearchPill className="ml-[14px] w-[218px]" />
      <div className="ml-[7px] grid grid-cols-[repeat(9,36px)] gap-x-[8px]">
        <Slot><TaskView /></Slot><Slot><ChatIcon /></Slot>
        <Slot><Mail /><span className="absolute top-[0px] left-[13px] flex h-4 w-[26px] items-center justify-center rounded-full bg-[#0a78d4] text-[11px] text-white"><Fit w={19}>99+</Fit></span></Slot>
        <Slot><Folder /></Slot><Slot><EdgeUser /></Slot><Slot><Armoury /></Slot><Slot><Chrome /></Slot><Slot state="dot"><Spotify /></Slot><Slot state="active"><Zm /></Slot>
      </div>
      <Tray time="10:01" muted>
        <svg className="mr-[21px] ml-[8px]" width="14" height="16" viewBox="0 0 14 16" fill="#0a4fa8"><path d="M7 0a5 5 0 0 1 5 5v4l2 3.500H0L2 9V5a5 5 0 0 1 5-5zM5 14h4c-.5 2-3.500 2-4 0z" /></svg>
      </Tray>
    </footer>
  );
}

/* ---------- side panel ---------- */
const people = [
  { i: "SV", n: "Sahitya Vaddempudi", w: 119, c: "bg-[#d35400]" },
  { i: "SC", n: "Saikrishna Chidumalla", w: 125, c: "bg-[#16a085]" },
  { i: "SM", n: "Shilpa Matta", w: 73, c: "bg-[#27ae60]" },
  { i: "SK", n: "Shiva kumar", w: 70, c: "bg-[#8e44ad]" },
  { i: "SM", n: "Shruthi M", w: 56, c: "bg-[#34495e]" },
  { i: "TS", n: "Tejaswi Syamalapalli", w: 117, c: "bg-[#16a085]" },
  { i: "VD", n: "Vasanth Dudari", w: 88, c: "bg-[#d35400]" },
];
const MicCut = () => (<svg width="16" height="16" viewBox="0 0 16 16" fill="none" stroke="#e02b3d" strokeWidth="1"><rect x="5.500" y=".8" width="5" height="8.500" rx="2.500" /><path d="M3.500 7.500c0 6 9 6 9 0M8 12v3M5 15h6M15.500.5.5 15.500" /></svg>);
const CamCut = () => (<svg width="17" height="16" viewBox="0 0 17 16" fill="none" stroke="#e02b3d" strokeWidth="1.100"><rect x=".7" y="3" width="11" height="10" rx="1" /><path d="m11.700 7 4.300-3v8l-4.300-3M15.500.5.5 15.500" /></svg>);
const PopOut = () => (<svg width="14" height="14" viewBox="0 0 14 14" fill="none" stroke="#6e7680" strokeWidth="1.600"><path d="M6 .9H3A2.100 2.100 0 0 0 .9 3v8A2.100 2.100 0 0 0 3 13.100h8a2.100 2.100 0 0 0 2.100-2.100V8M8.500 .9H11a2.100 2.100 0 0 1 2.100 2.100v2.500M10 4 5.500 8.500" /></svg>);

function Message({ a, c, n, w, t, bw, tw }: { a: string; c: string; n: string; w: number; t: string; bw: string; tw: number }) {
  return (
    <div className="h-[65px] pl-[13px]">
      <div className="ml-[37px] h-[19px] text-[12.500px] leading-[17px] text-[#6e7680]"><Fit w={w}><span className="text-[#0e72ed]">{n}</span> to <span className="text-[#0e72ed]">Everyone</span> <span className="text-[11px]">9:19</span></Fit></div>
      <div className="flex gap-[7px]">
        <span className={`flex size-6 items-center justify-center rounded-lg text-[14px] text-white ${c}`}>{a.length > 1 ? <Fit w={20}>{a}</Fit> : a}</span>
        <div className={`h-[38px] rounded-xl bg-[#f2f2f7] pl-[10px] text-[14px] leading-[34px] text-[#111] ${bw}`}><Fit w={tw}>{t}</Fit></div>
      </div>
    </div>
  );
}

function SidePanel() {
  return (
    <aside className="flex w-80 shrink-0 flex-col border-l border-[#e5e8ec] bg-white text-[#222230]">
      <div className="flex h-11 shrink-0 items-center bg-[#f0f3f7] text-[#6e7680]">
        <Fit w={101} className="ml-[83px] text-[13.500px] font-bold text-[#222230]">Participants (18)</Fit>
        <span className="ml-[84px]"><PopOut /></span><span className="ml-[13px]"><CloseIcon /></span>
      </div>
      <div className="mt-[10px] ml-[18px] flex h-8 w-[285px] shrink-0 items-center rounded-lg border border-[#b8b8cc] text-[#74747f]">
        <Search className="ml-[10px]" size={14} strokeWidth={1.500} /><Fit w={102} className="ml-[3px] text-[13px]">Find a participant</Fit>
      </div>
      <div className="flex h-[304px] shrink-0 pt-[2px]">
        <div className="w-[309px] overflow-hidden pl-[21.500px]">
          <div className="flex h-[14.500px] items-end"><div className="mb-[8px] flex h-[6px] w-[26px] rounded-b-lg bg-[#f39c12]" /><div className="mb-[12px] ml-[210px] h-[2px] w-[9px] bg-[#f0a5aa]" /><div className="mb-[12px] ml-[14px] h-[2px] w-[4px] bg-[#f0a5aa]" /></div>
          {people.map((p) => (
            <div key={p.n} className="flex h-[41px] items-center">
              <span className={`flex size-[26px] items-center justify-center rounded-lg text-[13px] font-bold text-white ${p.c}`}><Fit w={p.i === "SC" || p.i === "SK" || p.i === "TS" ? 15 : 18}>{p.i}</Fit></span>
              <Fit w={p.w + 1} className="ml-[13px] text-[13px]">{p.n}</Fit>
              <span className="mr-[13px] ml-auto flex gap-2"><MicCut /><CamCut /></span>
            </div>
          ))}
        </div>
        <div className="mt-0 h-[302px] w-2 rounded bg-[#f3f3f8] pt-[159px]"><div className="h-[143px] rounded bg-[#b0b0bb]" /></div>
      </div>
      <div className="flex h-[54px] shrink-0 items-center pt-[3px] pl-[58.500px] text-[13px]">
        <span className="flex h-[23px] w-[53px] items-center justify-center rounded-md border border-[#909099]"><Fit w={30}>Invite</Fit></span>
        <span className="ml-[59px] flex h-[23px] w-[90px] items-center justify-center rounded-md border border-[#909099]"><Fit w={67}>Unmute me</Fit></span>
      </div>
      <div className="flex h-11 shrink-0 items-center border-t border-[#e4e6ec] bg-[#f0f3f7] pb-px text-[#6e7680]">
        <Fit w={212} className="ml-[15px] text-[13px] font-bold text-[#222230]">Software Testing Demo I By Mr. ...</Fit>
        <span className="ml-[15px]"><Dots /></span><span className="ml-[12px]"><PopOut /></span><span className="ml-[13px]"><CloseIcon /></span>
      </div>
      <div className="flex h-[346px] shrink-0 overflow-hidden">
        <div className="-ml-px w-[311px]">
          <div className="flex gap-[7px] pl-[13px]">
            <span className="-mt-[14px] flex size-6 items-center justify-center rounded-lg bg-[#2980b9] text-[14px] text-white"><Fit w={18}>LO</Fit></span>
            <div className="-mt-[7px] h-[130px] w-[196px] rounded-b-xl bg-[#f2f2f7] pl-[10px] text-[14px] leading-5 text-[#111]">
              <Fit w={95}>Dear students,</Fit><br /><Fit w={172}>Class will start at 9:15 AM.</Fit><br /><Fit w={45}>Thanks</Fit><Fit w={57}>LiveTech</Fit>
            </div>
          </div>
          <div className="mt-[9px]">
            <Message a="SM" c="bg-[#8e44ad]" n="Shruthi M" w={155} t="Sir ,your screen is not visible" bw="w-[210px]" tw={185} />
            <Message a="R" c="bg-[#f39c12]" n="Rajesh.K" w={148} t="Visible sir" bw="w-[88px]" tw={63} />
            <Message a="AK" c="bg-[#f39c12]" n="Azas Khan" w={158} t="Visible sir" bw="w-[88px]" tw={63} />
          </div>
          <div className="-mt-[2px] flex items-center pl-[51px] text-[#6e7680]">
            <svg width="16" height="15" viewBox="0 0 16 15" fill="none" stroke="currentColor" strokeWidth="1.200"><path d="M9 3H3a2 2 0 0 0-2 2v4a2 2 0 0 0 2 2h1v3l3-3h5a2 2 0 0 0 2-2V7M13 0v5M10.500 2.500h5" /></svg>
            <SmilePlus className="ml-[8px]" size={16} strokeWidth={1.500} /><span className="ml-[10px]"><Dots s={12} /></span>
          </div>
        </div>
        <div className="w-2 rounded bg-[#f3f3f8] pt-[37px]"><div className="h-[309px] rounded bg-[#b0b0bb]" /></div>
      </div>
      <div className="flex h-[25px] shrink-0 items-center border-b border-[#ececf2] bg-[#f7f7fb] text-[12px] text-[#6e7680]">
        <svg className="ml-[38px]" width="13" height="14" viewBox="0 0 13 14"><circle cx="5" cy="3.500" r="2.700" fill="none" stroke="currentColor" /><path d="M7 12.500H.6C.6 8 4 7.600 7 8" fill="none" stroke="currentColor" /><path d="m9.500 6.500 3.300 1v3c0 1.500-1.500 2.800-3.300 3.500-1.800-.7-3.300-2-3.300-3.500v-3z" fill="#0e72ed" /></svg>
        <Fit w={228} className="ml-[4px]">Who can see your messages? Recording on</Fit>
      </div>
      <div className="mt-[13px] flex h-[23px] shrink-0 items-center pl-[12px] text-[12px]">
        <Fit w={15}>To:</Fit>
        <span className="ml-[9px] flex h-[22px] w-[73px] items-center rounded-md bg-[#0e72ed] pl-[7px] text-[11.500px] text-white"><Fit w={47}>Everyone</Fit><ChevronDown className="mt-[2px] ml-[3px]" size={10} strokeWidth={3} /></span>
      </div>
      <Fit w={138} className="mt-[7px] ml-[16px] text-[14.500px] leading-[22px] text-[#7b7b87]">Type message here...</Fit>
      <div className="mt-auto mb-[6px] flex items-center pl-[16px] text-[#6e7680]">
        <svg width="14" height="14" viewBox="0 0 14 14" fill="none" stroke="currentColor" strokeWidth="1.100"><path d="M0 1.500h7M3.500 1.500v8M5 12l1-3 5-5c1.500-1 3 .5 2 2L8 11l-4 2z" /></svg>
        <Smile className="ml-[17px]" size={17} strokeWidth={1.300} /><File className="ml-[16px]" size={16} strokeWidth={1.500} />
        <svg className="ml-[17px]" width="16" height="15" viewBox="0 0 16 15" fill="none" stroke="currentColor" strokeWidth="1.200"><path d="M6 12H3a2 2 0 0 1-2-2V3a2 2 0 0 1 2-2h7a2 2 0 0 1 2 2v5M12 8v6.500M8.700 11.500H15" /></svg>
        <ChevronDown className="ml-[10px]" size={11} strokeWidth={2.500} />
        <span className="ml-[134px] flex size-6 items-center justify-center rounded-md bg-[#ededf3]"><svg width="12" height="11" viewBox="0 0 12 11"><path d="M0 1h12L5.500 11 5 6.200 8.500 3.500 4 5z" fill="#7d7d88" /></svg></span>
      </div>
    </aside>
  );
}

export default function App() {
  return (
    <div className="flex h-[1080px] w-[1920px] flex-col overflow-hidden bg-[#0d0d0d] font-['Open_Sans','Noto_Sans',sans-serif]">
      <TopBar />
      <div className="flex h-[988px] shrink-0">
        <main className="relative flex w-[1600px] flex-col">
          <VideoStrip />
          <div className="ml-[39px] w-[1522px]"><PhotoViewer /><SharedTaskbar /></div>
          <span className="absolute top-[880px] left-5 flex size-8 items-center justify-center rounded-full bg-[#25292f] text-[#12d67c]">
            <svg width="15" height="17" viewBox="0 0 15 17" fill="none" stroke="currentColor" strokeWidth="1.300"><path d="M1 13.500V10L10 1.200c1.500-1 4 1 3 3L4.500 13zM8.500 3l3 3M0 16.300h14" /></svg>
          </span>
        </main>
        <SidePanel />
      </div>
      <LocalTaskbar />
    </div>
  );
}
